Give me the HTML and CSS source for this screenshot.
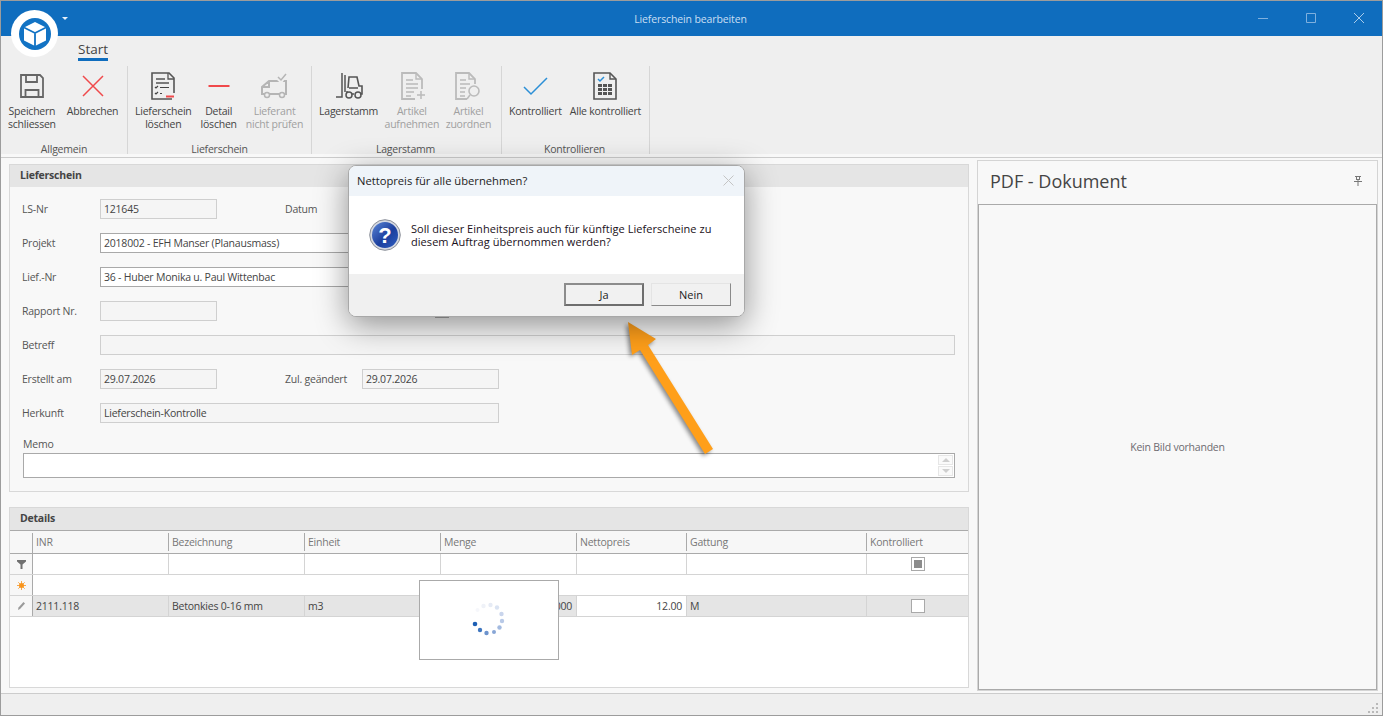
FILE: index.html
```html
<!DOCTYPE html>
<html lang="de">
<head>
<meta charset="utf-8">
<title>Lieferschein bearbeiten</title>
<link rel="stylesheet" href="styles.css">
</head>
<body>
<div class="window">
  <header class="titlebar">
    <span class="title">Lieferschein bearbeiten</span>
    <div class="winctl">
      <svg width="10" height="10" viewBox="0 0 10 10"><path d="M0 5.500h10" stroke="#7fb0de" fill="none"/></svg>
      <svg width="10" height="10" viewBox="0 0 10 10"><path d="M.5.500h9v9h-9z" stroke="#7fb0de" fill="none"/></svg>
      <svg width="10" height="10" viewBox="0 0 10 10"><path d="M0 0l10 10M10 0L0 10" stroke="#a9cbea" fill="none"/></svg>
    </div>
  </header>

  <section class="ribbon">
    <div class="tabs"><span class="tab">Start</span></div>
    <div class="groups">
      <div class="group g1">
        <div class="btns">
          <div class="rbtn">
            <svg class="ico" width="28" height="28" viewBox="0 0 28 28"><path d="M3 3h19l3 3v19H3z M8 3v7h11V3 M7.500 25v-7h13v7" fill="none" stroke="#666" stroke-width="1.800"/></svg>
            <span>Speichern<br>schliessen</span>
          </div>
          <div class="rbtn">
            <svg class="ico" width="28" height="28" viewBox="0 0 28 28"><path d="M4 4l20 20M24 4L4 24" fill="none" stroke="#f0494b" stroke-width="1.500"/></svg>
            <span>Abbrechen</span>
          </div>
        </div>
        <div class="glabel">Allgemein</div>
      </div>
      <div class="group g2">
        <div class="btns">
          <div class="rbtn">
            <svg class="ico" width="28" height="28" viewBox="0 0 28 28"><path d="M25 21V6l-5-5H3v26h20" fill="none" stroke="#555" stroke-width="1.600"/><path d="M19 1v6h6M7 7h9M7 11h13" fill="none" stroke="#555" stroke-width="1.300"/><path d="M6 15l1 1 2-2M11 15.500h9M6 21l1 1 2-2M11 21.500h2" fill="none" stroke="#444" stroke-width="1.200"/><path d="M17 24.500h8" stroke="#f0494b" stroke-width="2"/></svg>
            <span>Lieferschein<br>löschen</span>
          </div>
          <div class="rbtn">
            <svg class="ico" width="28" height="28" viewBox="0 0 28 28"><path d="M3.500 14h21" stroke="#f0494b" stroke-width="2"/></svg>
            <span>Detail<br>löschen</span>
          </div>
          <div class="rbtn off">
            <svg class="ico" width="28" height="28" viewBox="0 0 28 28"><path d="M8 9h17v13H1v-7z M8 9v6H1" fill="none" stroke="#b5b5b5" stroke-width="2"/><circle cx="6" cy="23" r="2.500" fill="#efefef" stroke="#b5b5b5" stroke-width="1.500"/><circle cx="21" cy="23" r="2.500" fill="#efefef" stroke="#b5b5b5" stroke-width="1.500"/><path d="M17 6l3 3 5-7" fill="none" stroke="#efefef" stroke-width="4"/><path d="M17 5l3 3 5-6" fill="none" stroke="#b5b5b5" stroke-width="1.500"/></svg>
            <span>Lieferant<br>nicht prüfen</span>
          </div>
        </div>
        <div class="glabel">Lieferschein</div>
      </div>
      <div class="group g3">
        <div class="btns">
          <div class="rbtn">
            <svg class="ico" width="28" height="28" viewBox="0 0 28 28"><path d="M7 1v24H1M10 3v17" fill="none" stroke="#555" stroke-width="1.500"/><path d="M13 16l1-11h8l2 9h3v8h-2M14 16h9M17 22h2M11 20h2" fill="none" stroke="#555" stroke-width="1.600"/><circle cx="14" cy="23" r="3" fill="none" stroke="#555" stroke-width="1.500"/><circle cx="23" cy="23" r="3" fill="none" stroke="#555" stroke-width="1.500"/></svg>
            <span>Lagerstamm</span>
          </div>
          <div class="rbtn off">
            <svg class="ico" width="28" height="28" viewBox="0 0 28 28"><path d="M24 17V7l-6-6H4v26h13" fill="none" stroke="#bbb" stroke-width="1.800"/><path d="M18 1v6h6M8 8h7M8 12h12M8 16h12M8 20h8M8 24h5" fill="none" stroke="#bbb" stroke-width="1.400"/><path d="M23 19v8M19 23h8" stroke="#bbb" stroke-width="1.500"/></svg>
            <span>Artikel<br>aufnehmen</span>
          </div>
          <div class="rbtn off">
            <svg class="ico" width="28" height="28" viewBox="0 0 28 28"><path d="M21 12V7l-6-6H2v26h11" fill="none" stroke="#bbb" stroke-width="1.800"/><path d="M15 1v6h6M6 8h6M6 12h10M6 16h6M6 20h5M6 24h5" fill="none" stroke="#bbb" stroke-width="1.400"/><circle cx="20" cy="19" r="5" fill="none" stroke="#bbb" stroke-width="1.600"/><path d="M16 23l-3 4" stroke="#bbb" stroke-width="1.600"/></svg>
            <span>Artikel<br>zuordnen</span>
          </div>
        </div>
        <div class="glabel">Lagerstamm</div>
      </div>
      <div class="group g4">
        <div class="btns">
          <div class="rbtn">
            <svg class="ico" width="28" height="28" viewBox="0 0 28 28"><path d="M3 15l7 7L26 6" fill="none" stroke="#2b8fd6" stroke-width="1.500"/></svg>
            <span>Kontrolliert</span>
          </div>
          <div class="rbtn">
            <svg class="ico" width="28" height="28" viewBox="0 0 28 28"><path d="M25 27V7l-6-6H3v26z" fill="none" stroke="#555" stroke-width="1.600"/><path d="M19 1v6h6" fill="none" stroke="#555" stroke-width="1.400"/><path d="M7 7l2 2 4-4" fill="none" stroke="#2b8fd6" stroke-width="1.500"/><path d="M7 12h14v11H7z" fill="#555"/><path d="M7 15.500h14M7 19.500h14M11.500 12v11M16.500 12v11" stroke="#efefef"/></svg>
            <span>Alle kontrolliert</span>
          </div>
        </div>
        <div class="glabel">Kontrollieren</div>
      </div>
    </div>
  </section>

  <main class="content">
    <div class="leftcol">
      <section class="panel form-panel">
        <h2 class="phead">Lieferschein</h2>
        <div class="form">
          <label class="lbl">LS-Nr</label><div class="in dis">121645</div>
          <label class="lbl c4">Datum</label><div class="in c5">29.07.2026</div>
          <label class="lbl">Projekt</label><div class="in wide">2018002 - EFH Manser (Planausmass)</div>
          <label class="lbl">Lief.-Nr</label><div class="in wide">36 - Huber Monika u. Paul Wittenbac</div>
          <label class="lbl">Rapport Nr.</label><div class="in dis"></div>
          <div class="chk c5"></div>
          <label class="lbl">Betreff</label><div class="in dis full"></div>
          <label class="lbl">Erstellt am</label><div class="in dis">29.07.2026</div>
          <label class="lbl c4">Zul. geändert</label><div class="in dis c5">29.07.2026</div>
          <label class="lbl">Herkunft</label><div class="in dis wide">Lieferschein-Kontrolle</div>
        </div>
        <div class="memo">
          <label class="memolbl">Memo</label>
          <div class="memobox">
            <div class="spin">
              <span class="sb"><i class="up"></i></span>
              <span class="sb"><i class="dn"></i></span>
            </div>
          </div>
        </div>
      </section>

      <section class="panel grid-panel">
        <h2 class="phead">Details</h2>
        <div class="gridwrap">
          <div class="row hdr">
            <div class="cell ind"></div><div class="cell">INR</div><div class="cell">Bezeichnung</div><div class="cell">Einheit</div><div class="cell">Menge</div><div class="cell">Nettopreis</div><div class="cell">Gattung</div><div class="cell">Kontrolliert</div>
          </div>
          <div class="row flt">
            <div class="cell ind"><svg width="9" height="9" viewBox="0 0 9 9"><path d="M0 0h9v1.500L5.500 4.500V9h-2V4.500L0 1.500z" fill="#707070"/></svg></div><div class="cell"></div><div class="cell"></div><div class="cell"></div><div class="cell"></div><div class="cell"></div><div class="cell"></div><div class="cell ctr"><span class="cb mixed"></span></div>
          </div>
          <div class="row newrow">
            <div class="cell ind"><svg width="9" height="9" viewBox="0 0 9 9"><circle cx="4.500" cy="4.500" r="2.500" fill="#f7941d"/><path d="M4.500 0v9M0 4.500h9M1.300 1.300l6.400 6.400M7.700 1.300L1.300 7.700" stroke="#f7941d" stroke-width=".8"/></svg></div><div class="cell"></div>
          </div>
          <div class="row data">
            <div class="cell ind"><svg width="9" height="10" viewBox="0 0 9 10"><path d="M1 9l.5-2.500L6.500 1 8 2.500 3 8z" fill="#9a9a9a"/></svg></div><div class="cell">2111.118</div><div class="cell">Betonkies 0-16 mm</div><div class="cell">m3</div><div class="cell num">1.000</div><div class="cell num active">12.00</div><div class="cell">M</div><div class="cell ctr"><span class="cb"></span></div>
          </div>
        </div>
      </section>
    </div>

    <aside class="pdf">
      <div class="pdfhead">
        <span class="pdftitle">PDF - Dokument</span>
        <svg class="pin" width="8" height="10" viewBox="0 0 8 10"><path d="M1 .5h6M2 3.500h4M2.500 .5v3M5.500 .5v3M0 5.500h8M4 5.500V10" fill="none" stroke="#777"/><path d="M3 4h2v1H3z" fill="#bbb"/></svg>
      </div>
      <div class="pdfbody">Kein Bild vorhanden</div>
    </aside>
  </main>

  <footer class="status">
    <svg width="11" height="11" viewBox="0 0 11 11"><path d="M9 1h2v2H9zM5 5h2v2H5zM9 5h2v2H9zM1 9h2v2H1zM5 9h2v2H5zM9 9h2v2H9z" fill="#b9b9b9"/></svg>
  </footer>

  <div class="logo">
    <div class="logo-in">
      <svg width="24" height="26" viewBox="0 0 24 26"><path d="M12 1l11 5.500v13L12 25 1 19.500v-13z" fill="#fff"/><path d="M1 6.500l11 5.500 11-5.500M12 12v13" fill="none" stroke="#1273c4" stroke-width="1.800" stroke-linejoin="round"/></svg>
    </div>
  </div>
  <div class="qat"></div>

  <div class="loader">
    <svg width="140" height="80" viewBox="0 0 140 80">
      <circle cx="56" cy="44" r="2.300" fill="#1c5fb4"/>
      <circle cx="61" cy="50" r="2.200" fill="#3f76bf" />
      <circle cx="67.500" cy="53" r="2.200" fill="#6c93cd"/>
      <circle cx="75" cy="52" r="2" fill="#88a6d6"/>
      <circle cx="80.500" cy="47.500" r="2.200" fill="#a3bae0"/>
      <circle cx="83" cy="41" r="2.200" fill="#b8c9e7"/>
      <circle cx="82.500" cy="34" r="2.200" fill="#c9d5ec"/>
      <circle cx="78" cy="27.500" r="2.200" fill="#dae3f2"/>
      <circle cx="71.500" cy="25" r="2.200" fill="#e6ebf5"/>
      <circle cx="64.500" cy="26" r="2.200" fill="#eff2f8"/>
      <circle cx="58.500" cy="30" r="2" fill="#f6f7fb"/>
    </svg>
  </div>

  <svg class="arrow" width="100" height="150" viewBox="620 315 100 150"><polygon points="628,322 656,339 648,345 713,449 705,454 640,350 632,355" fill="#ff9f1a"/></svg>

  <div class="dialog">
    <div class="dlgtitle">
      <span>Nettopreis für alle übernehmen?</span>
      <svg width="11" height="11" viewBox="0 0 11 11"><path d="M.5.500l10 10M10.500.500l-10 10" stroke="#c4c4c4" fill="none"/></svg>
    </div>
    <div class="dlgbody">
      <svg class="qicon" width="32" height="32" viewBox="0 0 32 32">
        <defs>
          <linearGradient id="qg" x1="0" y1="0" x2="1" y2="1"><stop offset="0" stop-color="#5b86d6"/><stop offset=".55" stop-color="#1c3f9e"/><stop offset="1" stop-color="#2f5fc0"/></linearGradient>
        </defs>
        <circle cx="16" cy="16" r="15.300" fill="#d5d9e2" stroke="#8b8f98"/>
        <circle cx="16" cy="16" r="13" fill="url(#qg)"/>
        <text x="16" y="24" class="qmark">?</text>
      </svg>
      <p class="dlgtext">Soll dieser Einheitspreis auch für künftige Lieferscheine zu<br>diesem Auftrag übernommen werden?</p>
    </div>
    <div class="dlgfoot">
      <button class="wbtn def">Ja</button>
      <button class="wbtn">Nein</button>
    </div>
  </div>
</div>
</body>
</html>
```
FILE: styles.css
```css
* { box-sizing: border-box; }
html, body { margin: 0; height: 100%; overflow: hidden; }
body { font-family: "Open Sans", "Liberation Sans", sans-serif; font-size: 10.5px; letter-spacing: -.22px; color: #444; }

.window { position: relative; width: 1383px; height: 716px; border: 1px solid #9c9c9c; display: flex; flex-direction: column; background: #f8f8f8; }

.titlebar { flex: 0 0 35px; background: #0f6dbe; display: flex; align-items: center; justify-content: center; position: relative; }
.title { color: #c9dff3; font-size: 10.5px; letter-spacing: -.12px; margin-right: 2px; }
.winctl { position: absolute; right: 18px; top: 12px; display: flex; gap: 38px; }

.ribbon { flex: 0 0 118px; background: #efefef; display: flex; flex-direction: column; }
.tabs { height: 30px; padding: 5px 0 0 77px; }
.tab { display: inline-block; height: 20px; font-size: 13.5px; line-height: 16px; letter-spacing: 0; color: #444; border-bottom: 3px solid #0f6dbe; }
.groups { display: flex; height: 88px; }
.group { display: flex; flex-direction: column; align-items: center; border-right: 1px solid #d6d6d6; padding: 0 3px; }
.g1 { width: 127px; }
.g1 .btns { gap: 3px; }
.g2 { width: 184px; }
.g2 .btns { gap: 1px; }
.g3 { width: 190px; }
.g3 .off { margin-left: -1.5px; }
.g3 .glabel { margin-right: 2px; }
.g4 { width: 148px; }
.g4 .glabel { margin-right: 2px; }
.btns { flex: 1; display: flex; width: 100%; }
.rbtn { padding: 6px 4px 0; text-align: center; line-height: 13px; color: #444; white-space: nowrap; display: flex; flex-direction: column; align-items: center; }
.rbtn.off { color: #a0a0a0; }
.ico { display: block; margin-bottom: 5px; }
.glabel { height: 10px; line-height: 11px; color: #555; }

.content { flex: 1; display: flex; gap: 8px; padding: 2px 3px 2px 8px; border-top: 1px solid #ccc; border-bottom: 1px solid #ccc; margin-top: 3px; min-height: 0; }
.leftcol { width: 960px; padding-top: 4px; display: flex; flex-direction: column; gap: 15px; }
.panel { border: 1px solid #d8d8d8; background: #f8f8f8; }
.phead { margin: 0; height: 22px; padding-left: 10px; background: #e5e5e5; font-size: 10.5px; font-weight: 700; line-height: 21px; color: #444; }
.form-panel { height: 328px; }
.grid-panel { height: 181px; background: #fff; }

.form { display: grid; grid-template-columns: 78px 117px 68px 77px 137px 1fr; grid-auto-rows: 20px; row-gap: 14px; padding: 12px 13px 0 12px; align-items: center; }
.lbl { grid-column: 1; color: #555; }
.lbl.c4 { grid-column: 4; }
.c5 { grid-column: 5; }
.in { height: 20px; border: 1px solid #a9a9a9; background: #fff; padding-left: 3px; line-height: 18px; white-space: nowrap; overflow: hidden; color: #444; }
.in.dis { border-color: #cfcfcf; background: #f5f5f5; }
.wide { grid-column: 2 / 6; }
.full { grid-column: 2 / -1; }
.chk { width: 14px; height: 14px; border: 1px solid #aaa; margin-left: 73px; }
.memo { padding: 14px 13px 0 13px; }
.memolbl { display: block; height: 14px; line-height: 14px; color: #555; }
.memobox { height: 25px; margin-top: 2px; border: 1px solid #a9a9a9; background: #fff; display: flex; justify-content: flex-end; }
.spin { width: 17px; padding: 1px; display: flex; flex-direction: column; gap: 1px; }
.sb { flex: 1; background: #fafafa; border: 1px solid #e6e6e6; display: flex; align-items: center; justify-content: center; }
.up { border: 4px solid transparent; border-top: 0; border-bottom: 4px solid #cfcfcf; }
.dn { border: 4px solid transparent; border-bottom: 0; border-top: 4px solid #cfcfcf; }

.gridwrap { border-top: 1px solid #aaa; }
.row { display: grid; grid-template-columns: 23px 136px 136px 136px 136px 110px 180px 1fr; height: 21px; border-bottom: 1px solid #d4d4d4; }
.row.hdr { height: 23px; background: #f7f7f7; border-bottom: 1px solid #aaa; color: #777; padding-top: 2px; }
.cell { border-right: 1px solid #d4d4d4; padding: 0 3px; line-height: 20px; overflow: hidden; white-space: nowrap; display: block; }
.hdr .cell { border-right: 0; border-left: 1px solid #aaa; margin-left: -1px; padding: 0 3px; line-height: 19px; height: 18px; }
.hdr .cell.ind { border-left: 0; margin-left: 0; }
.cell.ind { background: #f7f7f7; border-right: 1px solid #aaa; display: flex; align-items: center; justify-content: center; padding: 0; }
.hdr .ind { background: transparent; height: auto; }
.newrow { grid-template-columns: 23px 1fr; }
.newrow .cell:last-child, .flt .cell:last-child, .data .cell:last-child { border-right: 0; }
.data { background: #e5e5e5; }
.num { text-align: right; padding-right: 4px; }
.active { background: #fff; }
.ctr { display: flex; align-items: center; justify-content: center; }
.cb { width: 14px; height: 14px; border: 1px solid #a9a9a9; background: #fff; display: flex; align-items: center; justify-content: center; }
.cb.mixed::after { content: ""; width: 8px; height: 8px; background: #8c8c8c; }

.pdf { width: 401px; border: 1px solid #d4d4d4; display: flex; flex-direction: column; }
.pdfhead { height: 43px; display: flex; align-items: center; justify-content: space-between; padding: 0 15px 4px 12px; }
.pdftitle { font-size: 18px; letter-spacing: 0; color: #444; }
.pin { margin-top: 1px; }
.pdfbody { flex: 1; border: 1px solid #aaa; display: flex; align-items: center; justify-content: center; color: #6d6a70; }

.status { flex: 0 0 21px; background: #efefef; display: flex; justify-content: flex-end; align-items: flex-end; padding: 0 4px 2px 0; }

.logo { position: absolute; left: 10px; top: 9px; width: 47px; height: 47px; border-radius: 50%; background: #fff; display: flex; align-items: center; justify-content: center; }
.logo-in { width: 32px; height: 32px; border-radius: 50%; background: #1273c4; display: flex; align-items: center; justify-content: center; }
.qat { position: absolute; left: 61px; top: 16px; border: 3.5px solid transparent; border-bottom: 0; border-top: 3px solid #e8f1fa; }

.loader { position: absolute; left: 418px; top: 579px; width: 140px; height: 80px; border: 1px solid #aaa; background: #fff; }
.loader svg { display: block; margin: -1px; }

.arrow { position: absolute; left: 619px; top: 314px; filter: drop-shadow(-2px 2px 2px rgba(0,0,0,.45)); }

.dialog { position: absolute; left: 347px; top: 164px; width: 397px; height: 152px; border: 1px solid #a8a8a8; border-radius: 8px; overflow: hidden; background: #fff; box-shadow: 0 8px 32px rgba(0,0,0,.42); display: flex; flex-direction: column; letter-spacing: 0; }
.dlgtitle { flex: 0 0 30px; background: #eff4f9; display: flex; align-items: center; justify-content: space-between; padding: 0 10px 1px 8px; font-size: 11.2px; color: #222; }
.dlgbody { flex: 0 0 78px; display: flex; align-items: center; padding: 0 20px; gap: 10px; }
.dlgtext { margin: 0; font-size: 11px; line-height: 13px; color: #1a1020; white-space: nowrap; letter-spacing: .05px; }
.qicon { flex: none; }
.qmark { font-family: "Liberation Sans", sans-serif; font-size: 22px; font-weight: 700; fill: #fff; text-anchor: middle; }
.dlgfoot { flex: 1; background: #f0f0f0; display: flex; justify-content: flex-end; gap: 7px; padding: 9px 13px 0 0; align-items: flex-start; }
.wbtn { width: 80px; height: 23px; padding: 0; font: inherit; font-size: 11px; color: #222; background: #f1f1f1; border: 1px solid; border-color: #e4e4e4 #8a8a8a #8a8a8a #e4e4e4; }
.wbtn.def { border: 2px solid; border-color: #8c8c8c #6e6e6e #6e6e6e #8c8c8c; }
```
